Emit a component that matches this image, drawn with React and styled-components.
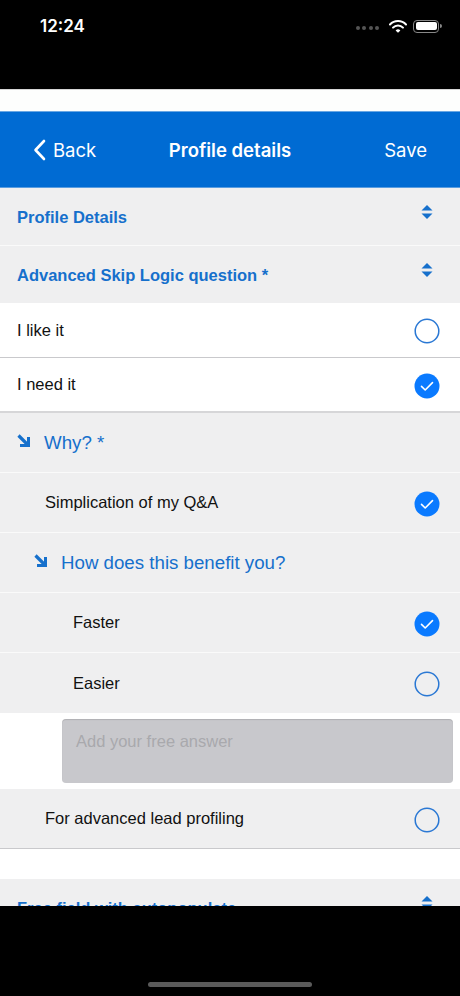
import React from 'react';
import styled, { createGlobalStyle } from 'styled-components';

const colors = {
  nav: '#006bd3',
  blue: '#1670cc',
  check: '#0a7aff',
  grey: '#efeff0',
  line: '#d0d0d4',
  text: '#111111',
};

const GlobalStyle = createGlobalStyle`
  html, body {
    margin: 0;
    padding: 0;
    background: #000;
  }
  * {
    box-sizing: border-box;
  }
`;

const SortIcon = () => (
  <svg width="12" height="14" viewBox="0 0 12 14">
    <path d="M6 0 L11.5 5.5 L0.5 5.5 Z" fill={colors.blue} />
    <path d="M6 14 L11.5 8.5 L0.5 8.5 Z" fill={colors.blue} />
  </svg>
);

const ArrowIcon = () => (
  <svg width="14" height="14" viewBox="0 0 14 14">
    <path d="M1.5 1.5 L10 10" stroke={colors.blue} strokeWidth="3.2" />
    <path d="M13 3 L13 13 L3 13 L3 10 L10 10 L10 3 Z" fill={colors.blue} />
  </svg>
);

const Radio = ({ checked }) =>
  checked ? (
    <svg width="26" height="26" viewBox="0 0 26 26">
      <circle cx="13" cy="13" r="12.5" fill={colors.check} />
      <path d="M7.5 13.4 L11.2 17 L18.5 9.6" stroke="#fff" strokeWidth="1.6" fill="none" strokeLinecap="round" strokeLinejoin="round" />
    </svg>
  ) : (
    <svg width="26" height="26" viewBox="0 0 26 26">
      <circle cx="13" cy="13" r="11.8" fill="none" stroke="#2a78d4" strokeWidth="1.5" />
    </svg>
  );

const App = () => {
  return (
    <Phone>
      <GlobalStyle />
      <StatusBar>
        <Time>12:24</Time>
        <StatusIcons>
          <Dots>
            <i /><i /><i /><i />
          </Dots>
          <svg width="18" height="13" viewBox="0 0 18 13">
            <path d="M1 4.5 A11 11 0 0 1 17 4.5" stroke="#fff" strokeWidth="2" fill="none" strokeLinecap="round" />
            <path d="M4 7.6 A6.8 6.8 0 0 1 14 7.6" stroke="#fff" strokeWidth="2" fill="none" strokeLinecap="round" />
            <path d="M6.6 10.4 L9 12.8 L11.4 10.4 A3.4 3.4 0 0 0 6.6 10.4 Z" fill="#fff" />
          </svg>
          <Battery>
            <BatteryFill />
          </Battery>
        </StatusIcons>
      </StatusBar>
      <TopStrip />
      <NavBar>
        <NavButton>
          <svg width="13" height="22" viewBox="0 0 13 22">
            <path d="M11 2 L2.5 11 L11 20" stroke="#fff" strokeWidth="2.6" fill="none" strokeLinecap="round" strokeLinejoin="round" />
          </svg>
          Back
        </NavButton>
        <NavTitle>Profile details</NavTitle>
        <NavButton>Save</NavButton>
      </NavBar>
      <Content>
        <SectionHeader $height={58}>
          <HeaderText>Profile Details</HeaderText>
          <SortIcon />
        </SectionHeader>
        <SectionHeader $height={57} $last>
          <HeaderText>Advanced Skip Logic question *</HeaderText>
          <SortIcon />
        </SectionHeader>
        <Option $white>
          <OptionText>I like it</OptionText>
          <Radio />
        </Option>
        <Option $white $thick>
          <OptionText>I need it</OptionText>
          <Radio checked />
        </Option>
        <SubQuestion $indent={17}>
          <ArrowIcon />
          <SubText>Why? *</SubText>
        </SubQuestion>
        <Option $indent={45}>
          <OptionText>Simplication of my Q&amp;A</OptionText>
          <Radio checked />
        </Option>
        <SubQuestion $indent={34}>
          <ArrowIcon />
          <SubText>How does this benefit you?</SubText>
        </SubQuestion>
        <Option $indent={73}>
          <OptionText>Faster</OptionText>
          <Radio checked />
        </Option>
        <Option $indent={73} $noLine>
          <OptionText>Easier</OptionText>
          <Radio />
        </Option>
        <AnswerArea>
          <AnswerBox placeholder="Add your free answer" />
        </AnswerArea>
        <Option $indent={45} $grey>
          <OptionText>For advanced lead profiling</OptionText>
          <Radio />
        </Option>
        <Spacer />
        <SectionHeader $height={58}>
          <HeaderText>Free field with autopopulate</HeaderText>
          <SortIcon />
        </SectionHeader>
      </Content>
      <BottomBar>
        <HomeIndicator />
      </BottomBar>
    </Phone>
  );
};

const Phone = styled.div`
  width: 460px;
  height: 996px;
  display: flex;
  flex-direction: column;
  background: #fff;
  font-family: 'Liberation Sans', Arial, sans-serif;
  overflow: hidden;
`;

const StatusBar = styled.div`
  height: 89px;
  flex: none;
  background: #000;
  display: flex;
  align-items: flex-start;
  justify-content: space-between;
  padding: 14px 21px 0 40px;
`;

const Time = styled.div`
  color: #fff;
  font-family: Inter, 'Liberation Sans', sans-serif;
  font-weight: 600;
  font-size: 17px;
  line-height: 24px;
`;

const StatusIcons = styled.div`
  display: flex;
  align-items: center;
  gap: 6px;
  height: 24px;
`;

const Dots = styled.div`
  display: flex;
  gap: 2.5px;
  margin-right: 4px;
  margin-top: 3px;

  i {
    width: 4px;
    height: 4px;
    border-radius: 50%;
    background: #555;
  }
`;

const Battery = styled.div`
  position: relative;
  width: 26px;
  height: 13px;
  border: 1.2px solid #888;
  border-radius: 4px;
  padding: 1.5px;

  &::after {
    content: '';
    position: absolute;
    right: -4px;
    top: 3.5px;
    width: 2px;
    height: 4px;
    border-radius: 0 2px 2px 0;
    background: #888;
  }
`;

const BatteryFill = styled.div`
  width: 100%;
  height: 100%;
  background: #fff;
  border-radius: 2px;
`;

const TopStrip = styled.div`
  height: 22px;
  flex: none;
  background: #fdfefd;
  border-top: 1px solid #d6d6d6;
`;

const NavBar = styled.div`
  height: 77px;
  flex: none;
  background: ${colors.nav};
  border-top: 1px solid #6aa7e3;
  border-bottom: 1px solid #5a9de0;
  position: relative;
  display: flex;
  align-items: center;
  justify-content: space-between;
  padding: 0 33px 0 33px;
`;

const NavButton = styled.div`
  display: flex;
  align-items: center;
  gap: 7px;
  color: #fff;
  font-family: Inter, 'Liberation Sans', sans-serif;
  font-size: 18.5px;
  margin-top: 1px;
`;

const NavTitle = styled.div`
  position: absolute;
  left: 0;
  right: 0;
  text-align: center;
  color: #fff;
  font-family: Inter, 'Liberation Sans', sans-serif;
  font-weight: 600;
  font-size: 18.5px;
  pointer-events: none;
`;

const Content = styled.div`
  flex: 1;
  overflow: hidden;
  background: #fff;
`;

const SectionHeader = styled.div`
  height: ${(p) => p.$height}px;
  background: ${colors.grey};
  display: flex;
  align-items: center;
  justify-content: space-between;
  padding: 0 27px 0 17px;
  border-bottom: ${(p) => (p.$last ? 'none' : '1.5px solid #fafafa')};

  svg {
    margin-top: -10px;
  }
`;

const HeaderText = styled.div`
  color: ${colors.blue};
  font-weight: 700;
  font-size: 16.5px;
  margin-top: 1px;
`;

const Option = styled.div`
  height: ${(p) => (p.$white ? 55 : 60)}px;
  background: ${(p) => (p.$white ? '#fff' : colors.grey)};
  display: flex;
  align-items: center;
  justify-content: space-between;
  padding: 0 20px 0 ${(p) => p.$indent || 17}px;
  border-bottom: ${(p) =>
    p.$noLine
      ? 'none'
      : p.$thick
      ? '2px solid #d6d6d8'
      : p.$white || p.$grey
      ? '1px solid #c9c9cc'
      : '1.5px solid #fafafa'};

  svg {
    margin-top: 2px;
  }
`;

const OptionText = styled.div`
  color: ${colors.text};
  font-size: 16.5px;
  margin-top: 0;
`;

const SubQuestion = styled.div`
  height: 60px;
  background: ${colors.grey};
  display: flex;
  align-items: center;
  gap: 13px;
  padding-left: ${(p) => p.$indent}px;
  border-bottom: 1.5px solid #fafafa;

  svg {
    margin-top: -4px;
  }
`;

const SubText = styled.div`
  color: ${colors.blue};
  font-size: 18.7px;
  margin-top: 1px;
`;

const AnswerArea = styled.div`
  height: 76px;
  background: #fff;
  padding: 6px 7px 6px 62px;
`;

const AnswerBox = styled.textarea`
  width: 100%;
  height: 64px;
  resize: none;
  border: none;
  outline: none;
  border-radius: 4px;
  background: #c8c8cc;
  box-shadow: inset 0 1px 1px rgba(0, 0, 0, 0.12);
  padding: 13px 14px;
  font-family: 'Liberation Sans', Arial, sans-serif;
  font-size: 16.5px;

  &::placeholder {
    color: #a9a9ad;
  }
`;

const Spacer = styled.div`
  height: 30px;
  background: #fff;
`;

const BottomBar = styled.div`
  height: 90px;
  flex: none;
  background: #000;
  display: flex;
  align-items: flex-end;
  justify-content: center;
  padding-bottom: 9px;
`;

const HomeIndicator = styled.div`
  width: 164px;
  height: 5px;
  border-radius: 3px;
  background: #5a5a5a;
`;

export default App;
